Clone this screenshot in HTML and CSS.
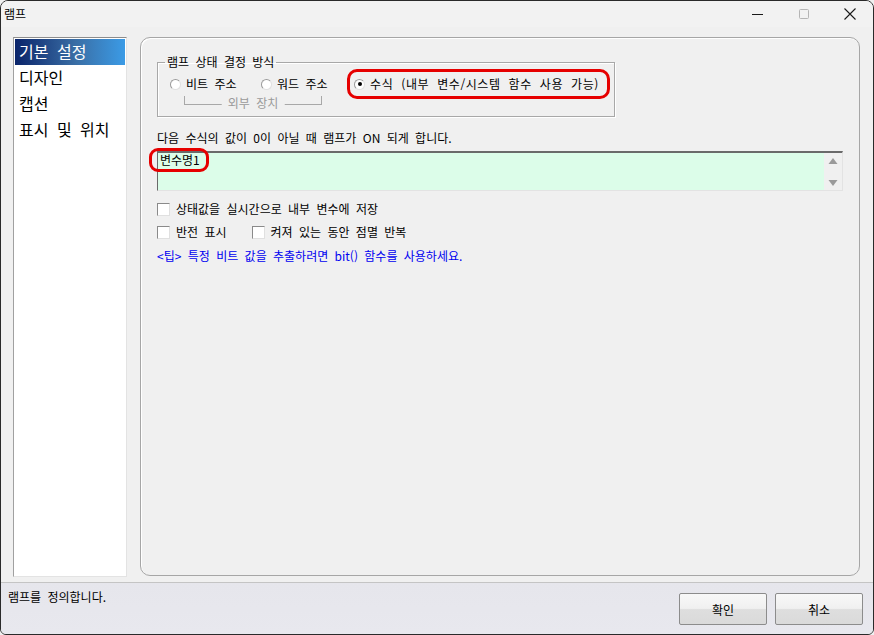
FILE: index.html
```html
<!DOCTYPE html>
<html lang="ko">
<head>
<meta charset="utf-8">
<title>램프</title>
<link rel="stylesheet" href="styles.css">
</head>
<body>
<div class="window">
  <div class="titlebar">
    <span class="title">램프</span>
    <div class="controls">
      <span class="ctl"><svg width="14" height="14" viewBox="0 0 14 14"><line x1="1" y1="7.5" x2="12" y2="7.5" stroke="#1a1a1a" stroke-width="1.2"/></svg></span>
      <span class="ctl"><svg width="14" height="14" viewBox="0 0 14 14"><rect x="2.5" y="2.5" width="9" height="9" rx="1" fill="none" stroke="#b5b5b5" stroke-width="1"/></svg></span>
      <span class="ctl"><svg width="14" height="14" viewBox="0 0 14 14"><path d="M1.5 1.5 L12.5 12.5 M12.5 1.5 L1.5 12.5" stroke="#1a1a1a" stroke-width="1.1"/></svg></span>
    </div>
  </div>
  <div class="main">
    <ul class="nav">
      <li class="sel">기본 설정</li>
      <li>디자인</li>
      <li>캡션</li>
      <li>표시 및 위치</li>
    </ul>
    <div class="panel">
      <fieldset class="group">
        <legend>램프 상태 결정 방식</legend>
        <div class="radios">
          <div class="ext">
            <div class="ext-row">
              <label class="radio"><span class="rdot"></span>비트 주소</label>
              <label class="radio"><span class="rdot"></span>워드 주소</label>
            </div>
            <div class="bracket"><span class="btext">외부 장치</span></div>
          </div>
          <label class="radio hl"><span class="rdot on"></span>수식 (내부 변수/시스템 함수 사용 가능)</label>
        </div>
      </fieldset>
      <p class="desc">다음 수식의 값이 0이 아닐 때 램프가 ON 되게 합니다.</p>
      <div class="editor">
        <div class="edit-text"><span class="hlbox">변수명1</span></div>
        <div class="scroll">
          <svg width="10" height="8" viewBox="0 0 10 8"><path d="M5 1 L9.5 7 L0.5 7 Z" fill="#9a9a9a"/></svg>
          <svg width="10" height="8" viewBox="0 0 10 8"><path d="M0.5 1 L9.5 1 L5 7 Z" fill="#9a9a9a"/></svg>
        </div>
      </div>
      <div class="checks">
        <label class="check"><span class="box"></span>상태값을 실시간으로 내부 변수에 저장</label>
        <div class="check-row">
          <label class="check"><span class="box"></span>반전 표시</label>
          <label class="check"><span class="box"></span>켜져 있는 동안 점멸 반복</label>
        </div>
      </div>
      <p class="tip">&lt;팁&gt; 특정 비트 값을 추출하려면 bit() 함수를 사용하세요.</p>
    </div>
  </div>
  <div class="statusbar">
    <span class="status">램프를 정의합니다.</span>
    <div class="buttons">
      <button class="btn">확인</button>
      <button class="btn">취소</button>
    </div>
  </div>
</div>
</body>
</html>
```
FILE: styles.css
```css
* { box-sizing: border-box; }
html, body { margin: 0; padding: 0; background: #f0f0f0; }
body {
  font-family: "Noto Sans CJK KR", "Noto Sans", sans-serif;
  font-size: 12px;
  color: #000;
  word-spacing: 3px;
}
.window {
  width: 874px;
  height: 635px;
  border: 1px solid #2a2a2a;
  border-radius: 8px 8px 6px 6px;
  background: #f0f0f0;
  display: flex;
  flex-direction: column;
  overflow: hidden;
}
.titlebar {
  height: 26px;
  flex: none;
  display: flex;
  align-items: center;
  justify-content: space-between;
  background: #f2f2f2;
  padding-left: 3px;
}
.title { font-size: 12px; line-height: 14px; }
.controls { display: flex; height: 26px; align-items: center; }
.ctl {
  width: 46px;
  height: 26px;
  display: flex;
  align-items: center;
  justify-content: center;
}
.main {
  flex: 1;
  display: flex;
  gap: 13px;
  padding: 10px 13px 5px 12px;
}
.nav {
  list-style: none;
  margin: 0;
  padding: 1px;
  width: 114px;
  background: #fff;
  border: 1px solid #e3e3e3;
  border-top-color: #8c8c8c;
  border-left-color: #a0a0a0;
  font-size: 16px;
  word-spacing: 4px;
}
.nav li {
  height: 26px;
  line-height: 25px;
  padding-left: 4px;
  white-space: nowrap;
}
.nav li.sel {
  color: #fff;
  background: linear-gradient(to right, #0a246a, #3a6ea5 55%, #3b9be6);
}
.panel {
  flex: 1;
  border: 1px solid #a6a6a6;
  border-radius: 10px;
  box-shadow: inset 1px 1px 0 #ffffff;
  padding: 17px 16px 0 16px;
  margin-bottom: 1px;
}
.group {
  margin: 0;
  width: 458px;
  height: 62px;
  border: 1px solid #a8a8a8;
  box-shadow: inset 1px 1px 0 #fff, 1px 1px 0 #fff;
  padding: 0 0 0 12px;
}
.group legend {
  padding: 0 2px;
  margin-left: -5px;
  line-height: 14px;
  word-spacing: 3px;
}
.radios {
  display: flex;
  align-items: flex-start;
  margin-top: 4px;
}
.ext { display: flex; flex-direction: column; width: 176px; }
.ext-row { display: flex; height: 22px; align-items: center; }
.ext-row .radio:first-child { width: 91px; }
.radio {
  display: flex;
  align-items: center;
  gap: 5px;
  white-space: nowrap;
  line-height: 16px;
}
.rdot {
  width: 11px;
  height: 11px;
  border-radius: 50%;
  background: #fff;
  border: 1px solid #9a9a9a;
  border-right-color: #e0e0e0;
  border-bottom-color: #e0e0e0;
  flex: none;
  position: relative;
}
.rdot.on::after {
  content: "";
  position: absolute;
  left: 2.5px;
  top: 2.5px;
  width: 4px;
  height: 4px;
  border-radius: 50%;
  background: #000;
}
.bracket {
  margin-left: 14px;
  width: 138px;
  height: 9px;
  border: 1px solid #a8a8a8;
  border-top: none;
  position: relative;
  margin-top: 1px;
}
.btext {
  position: absolute;
  left: 50%;
  top: 0;
  transform: translate(-50%, 0);
  background: #f0f0f0;
  color: #9a9a9a;
  padding: 0 6px;
  line-height: 14px;
  white-space: nowrap;
}
.radio.hl {
  margin-left: 1px;
  margin-top: -4px;
  height: 30px;
  width: 263px;
  padding: 0 8px 0 4px;
  border: 3px solid #e60000;
  border-radius: 10px;
  letter-spacing: 0.6px;
  word-spacing: 4px;
}
.desc {
  margin: 13px 0 0 0;
  line-height: 16px;
}
.editor {
  margin-top: 5px;
  width: 686px;
  height: 40px;
  display: flex;
  border: 1px solid #e3e3e3;
  border-top: 2px solid #6a6a6a;
  border-left: 1px solid #6a6a6a;
  background: #dcfde9;
}
.edit-text { flex: 1; padding: 0 0 0 2px; display: flex; align-items: flex-start; }
.hlbox {
  display: block;
  line-height: 14px;
  padding: 2px 6px 2px 8px;
  margin-left: -11px;
  margin-top: -5px;
  border: 3px solid #e60000;
  border-radius: 9px;
}
.scroll {
  width: 18px;
  background: #f0f0f0;
  display: flex;
  flex-direction: column;
  justify-content: space-between;
  align-items: center;
  padding: 4px 0 3px;
}
.checks { margin-top: 11px; display: flex; flex-direction: column; gap: 9px; }
.check-row { display: flex; gap: 25px; }
.check {
  display: flex;
  align-items: center;
  gap: 6px;
  line-height: 14px;
  white-space: nowrap;
}
.box {
  width: 13px;
  height: 13px;
  background: #fff;
  border: 1px solid #8a8a8a;
  border-right-color: #e0e0e0;
  border-bottom-color: #e0e0e0;
  flex: none;
}
.tip {
  margin: 9px 0 0 0;
  color: #0000f0;
  line-height: 16px;
}
.statusbar {
  height: 52px;
  flex: none;
  border-top: 1px solid #c4c4c4;
  background: linear-gradient(#e6e6ec, #e8e8ee);
  display: flex;
  justify-content: space-between;
  align-items: flex-start;
  padding: 0 10px 0 7px;
}
.status { margin-top: 7px; line-height: 14px; }
.buttons { display: flex; gap: 8px; margin-top: 10px; }
.btn {
  width: 88px;
  height: 32px;
  font-family: inherit;
  font-size: 12px;
  border: 1px solid #8c8c8c;
  border-radius: 2px;
  background: linear-gradient(#f8f8f8, #f0f0f0 48%, #dedede 52%, #dadada);
  color: #000;
  padding: 0;
}
```
